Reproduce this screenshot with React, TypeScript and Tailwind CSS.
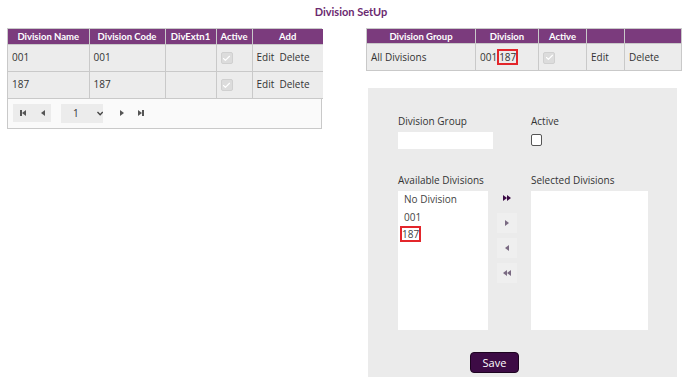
import { Check } from 'lucide-react';

const LEFT_ROWS = [
  { name: '001', code: '001' },
  { name: '187', code: '187' },
];

function DisabledCheck() {
  return (
    <span className="inline-flex items-center justify-center w-[12px] h-[12px] rounded-[2px] bg-[#dcdcdc] border border-[#d0d0d0]">
      <Check className="w-[9px] h-[9px] text-white" strokeWidth={3} />
    </span>
  );
}

// red highlight box drawn round a value
function Marked({ children }: { children: string }) {
  return (
    <span className="inline-block w-[21px] h-[16px] text-center leading-[12px] border-2 border-solid border-[#e3262b]">
      {children}
    </span>
  );
}

function Tri({ dir }: { dir: 'l' | 'r' }) {
  return (
    <svg width="4" height="6" viewBox="0 0 4 6" className="fill-current">
      {dir === 'r' ? <path d="M0 0 L4 3 L0 6Z" /> : <path d="M4 0 L0 3 L4 6Z" />}
    </svg>
  );
}

function Bar() {
  return <span className="inline-block w-[1.5px] h-[6px] bg-current" />;
}

function Pager() {
  return (
    <div className="flex items-center h-[29px] pl-[5px] bg-[#fafafa] text-[#555]">
      <div className="flex items-center bg-[#ececec] h-[18px] w-[38px]">
        <span className="flex items-center ml-[7px]"><Bar /><Tri dir="l" /></span>
        <span className="flex items-center ml-[15px]"><Tri dir="l" /></span>
      </div>
      <div className="ml-[10px] flex items-center bg-[#ececec] h-[19px] w-[42px] text-[10px] text-[#333]">
        <span className="ml-[12px]">1</span>
        <svg width="7" height="5" viewBox="0 0 7 5" className="ml-[18px]">
          <path d="M0.5 0.8 L3.5 3.8 L6.5 0.8" stroke="#444" strokeWidth="1.6" fill="none" />
        </svg>
      </div>
      <span className="flex items-center ml-[17px]"><Tri dir="r" /></span>
      <span className="flex items-center ml-[14px]"><Tri dir="r" /><Bar /></span>
    </div>
  );
}

function ArrowBtn({ kind, plain }: { kind: 'rr' | 'r' | 'l' | 'll'; plain?: boolean }) {
  return (
    <div className={`w-[20px] h-[20px] flex items-center justify-center ${plain ? '' : 'bg-[#efefef]'} ${kind === 'rr' ? 'text-[#3b0a45]' : 'text-[#7a6a82]'}`}>
      {kind === 'rr' && <span className="flex"><Tri dir="r" /><Tri dir="r" /></span>}
      {kind === 'r' && <Tri dir="r" />}
      {kind === 'l' && <Tri dir="l" />}
      {kind === 'll' && <span className="flex"><Tri dir="l" /><Tri dir="l" /></span>}
    </div>
  );
}

export default function App() {
  const th = "bg-[#7b3b7d] text-white font-bold font-['Lato',sans-serif] text-[9.5px] h-[15px] p-0 border border-[#c9c9c9] text-center leading-[13px]";
  const td = 'bg-[#ececec] h-[27px] border border-[#c9c9c9] px-[4px] text-[10px] text-[#333]';

  return (
    <div className="w-[688px] h-[377px] bg-white overflow-hidden font-['Open_Sans',sans-serif]">
      <h1 className="text-center text-[11px] font-bold font-['Lato',sans-serif] text-[#6b2a70] pt-[4px] pl-[14px] h-[28px]">Division SetUp</h1>

      <div className="flex items-start justify-between px-[7px]">
        {/* left: division list */}
        <div className="w-[315px] border border-[#c9c9c9]">
          <table className="w-full border-collapse table-fixed">
            <colgroup>
              <col className="w-[81px]" />
              <col className="w-[76px]" />
              <col className="w-[51px]" />
              <col className="w-[36px]" />
              <col className="w-[71px]" />
            </colgroup>
            <thead>
              <tr>
                <th className={`${th} border-l-0 border-t-0`}>Division Name</th>
                <th className={`${th} border-t-0`}>Division Code</th>
                <th className={`${th} border-t-0`}>DivExtn1</th>
                <th className={`${th} border-t-0`}>Active</th>
                <th className={`${th} border-r-0 border-t-0`}>Add</th>
              </tr>
            </thead>
            <tbody>
              {LEFT_ROWS.map(r => (
                <tr key={r.name}>
                  <td className={`${td} border-l-0`}>{r.name}</td>
                  <td className={td}>{r.code}</td>
                  <td className={td}></td>
                  <td className={`${td} pt-[3px]`}><DisabledCheck /></td>
                  <td className={`${td} border-r-0`}>Edit&nbsp; Delete</td>
                </tr>
              ))}
            </tbody>
          </table>
          <Pager />
        </div>

        {/* right: group list + form */}
        <div className="w-[315px]">
          <table className="w-full border-collapse table-fixed border border-[#c9c9c9]">
            <colgroup>
              <col className="w-[109px]" />
              <col className="w-[63px]" />
              <col className="w-[48px]" />
              <col className="w-[38px]" />
              <col className="w-[57px]" />
            </colgroup>
            <thead>
              <tr>
                <th className={th}>Division Group</th>
                <th className={th}>Division</th>
                <th className={th}>Active</th>
                <th className={th}></th>
                <th className={th}></th>
              </tr>
            </thead>
            <tbody>
              <tr>
                <td className={`${td} pr-0`}>All Divisions</td>
                <td className={`${td} pr-0`}>
                  001<Marked>187</Marked>
                </td>
                <td className={`${td} pt-[3px]`}><DisabledCheck /></td>
                <td className={td}>Edit</td>
                <td className={td}>Delete</td>
              </tr>
            </tbody>
          </table>

          <div className="ml-[2px] w-[309px] h-[300px] mt-[17px] bg-[#ebebeb] pt-[26px] pl-[30px] text-[10px] text-[#333]">
            <div className="flex">
              <div className="w-[133px]">
                <div className="h-[18px]">Division Group</div>
                <div className="w-[95px] h-[17px] bg-white" />
              </div>
              <div>
                <div className="h-[20px]">Active</div>
                <div className="w-[11px] h-[12px] border border-[#555] rounded-[2px] bg-white" />
              </div>
            </div>

            <div className="flex mt-[24px]">
              <div>
                <div className="h-[18px]">Available Divisions</div>
                <div className="w-[90px] h-[139px] bg-white pl-[6px] text-[#444] leading-[17.5px]">
                  <div>No Division</div>
                  <div>001</div>
                  <div className="-ml-[4px]">
                    <Marked>187</Marked>
                  </div>
                </div>
              </div>
              <div className="ml-[9px] mr-[14px] pt-[15px] flex flex-col gap-[5px]">
                <ArrowBtn kind="rr" plain />
                <ArrowBtn kind="r" />
                <ArrowBtn kind="l" />
                <ArrowBtn kind="ll" />
              </div>
              <div>
                <div className="h-[18px]">Selected Divisions</div>
                <div className="w-[117px] h-[139px] bg-white" />
              </div>
            </div>

            <button className="mt-[22px] ml-[72px] w-[49px] h-[21px] rounded-[4px] bg-[#3d0b45] border border-[#1d0320] text-white text-[11px] leading-none">
              Save
            </button>
          </div>
        </div>
      </div>
    </div>
  );
}
